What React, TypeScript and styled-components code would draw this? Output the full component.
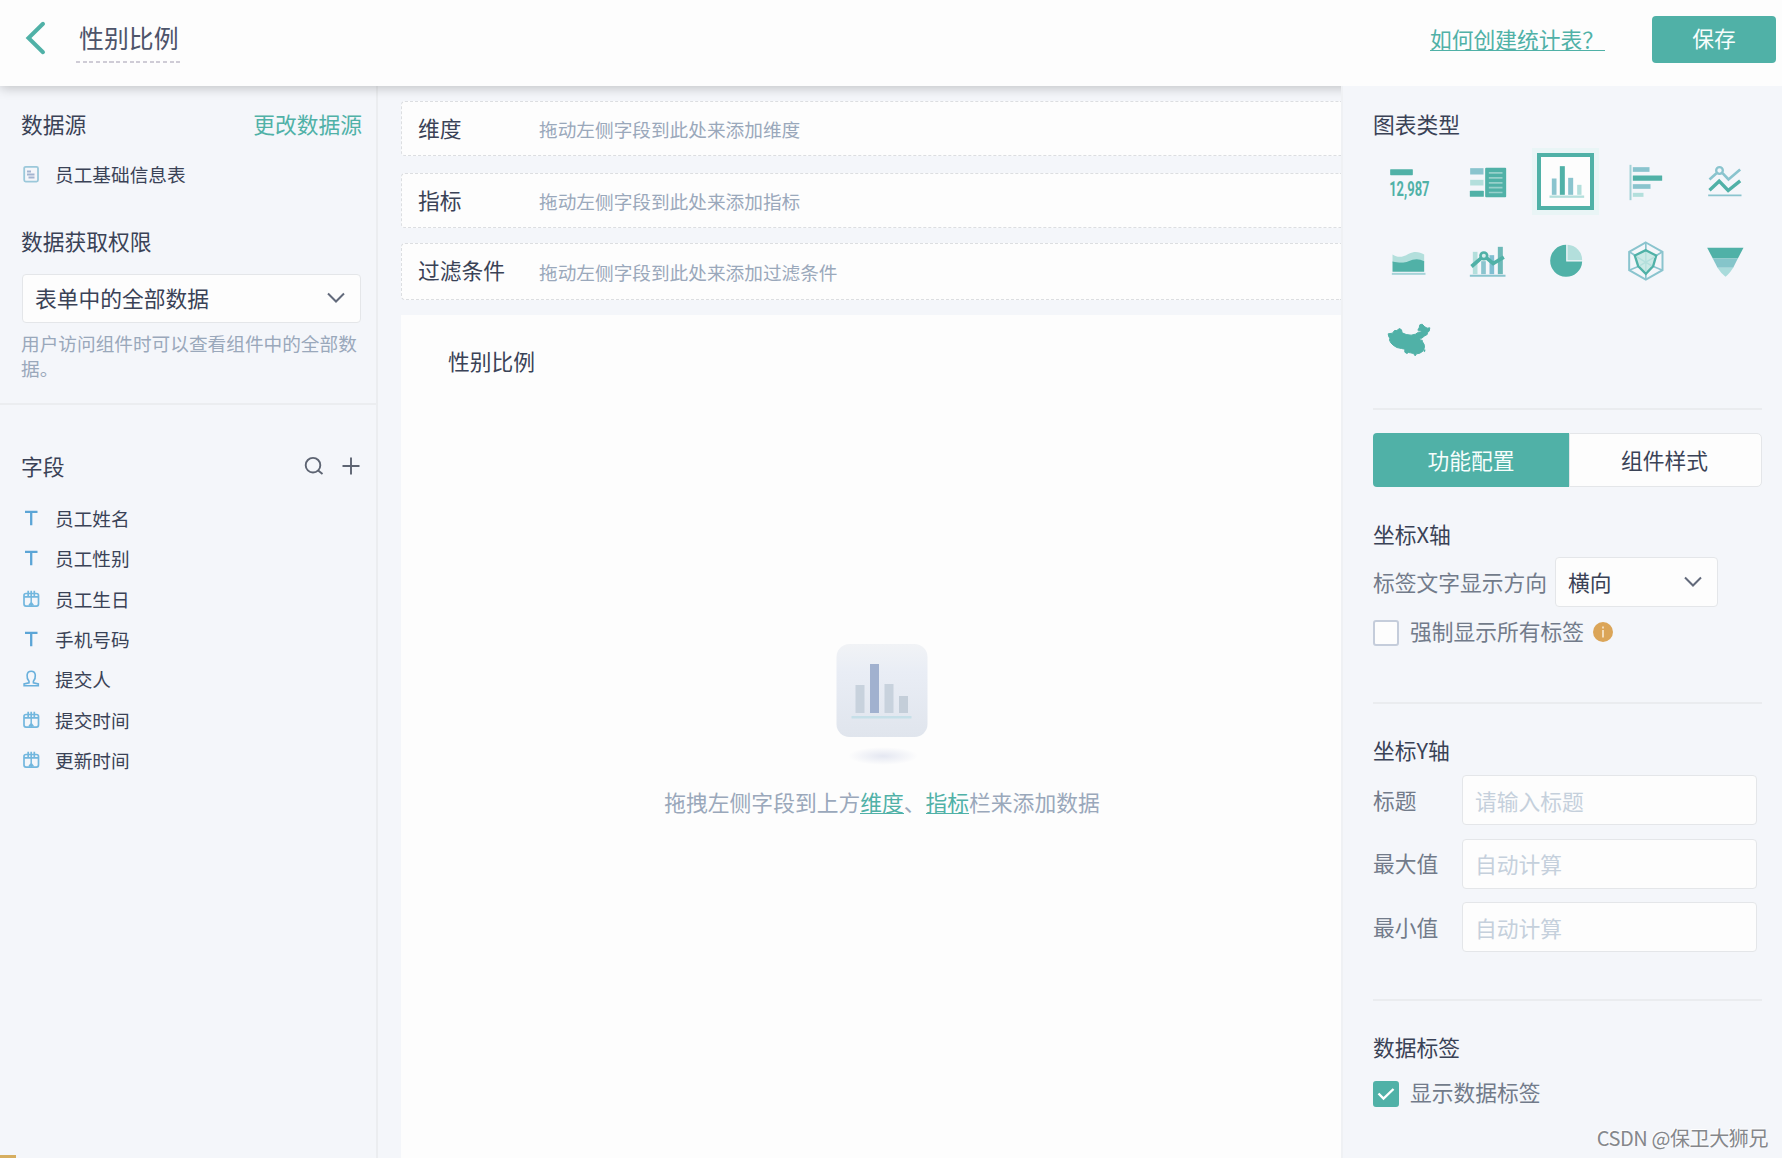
import React from "react";
import styled, { createGlobalStyle } from "styled-components";

const teal = "#50b1a7";
const blueTeal = "#8ac4ce";
const paleTeal = "#b3dfdc";
const ink = "#3a4256";
const soft = "#727b8a";
const muted = "#9aa8bb";
const panel = "#f4f6fa";
const paper = "#fdfdfd";
const line = "#e4e6e9";

const GlobalStyle = createGlobalStyle`
  * { box-sizing: border-box; }
  body {
    margin: 0;
    background: ${panel};
    color: ${ink};
    font-family: "Noto Sans CJK SC", "Liberation Sans", sans-serif;
    font-size: 21.77px;
    line-height: 28px;
    overflow: hidden;
  }
`;

const Page = styled.div`
  display: flex;
  flex-direction: column;
  height: 1158px;
  position: relative;
  overflow: hidden;
`;

const Header = styled.header`
  display: flex;
  align-items: flex-start;
  height: 86px;
  flex: none;
  padding: 0 6px 0 24px;
  background: ${paper};
  box-shadow: 0 2px 11px rgba(0, 0, 0, 0.22);
  position: relative;
  z-index: 1;
`;

const BackIcon = styled.svg`
  width: 24px;
  height: 36px;
  margin-top: 20px;
`;

const PageTitle = styled.div`
  margin: 19px auto 0 28px;
  height: 44px;
  width: 106px;
  padding-left: 3px;
  font-size: 24.9px;
  line-height: 37px;
  white-space: nowrap;
  color: #4d546a;
  background: repeating-linear-gradient(90deg, #cfccd6 0 4px, transparent 4px 6.7px) left bottom / 100% 2px no-repeat;
`;

const HelpLink = styled.a`
  margin: 25px 47px 0 0;
  color: ${teal};
  width: 175px;
  height: 26px;
  line-height: 28px;
  white-space: nowrap;
  border-bottom: 1.5px solid ${teal};
`;

const SaveButton = styled.button`
  margin-top: 15.5px;
  width: 124px;
  height: 47px;
  padding: 0 0 2px;
  border: 0;
  border-radius: 4px;
  background: ${teal};
  color: #f6fdfc;
  font: inherit;
`;

const Body = styled.div`
  display: flex;
  flex: 1;
  min-height: 0;
`;

const Sidebar = styled.aside`
  width: 378px;
  flex: none;
  padding-top: 24px;
  border-right: 2px solid #ebedf0;
`;

const SideSection = styled.section`
  padding: 0 14px 0 21px;
`;

const SideHead = styled.div`
  display: flex;
  justify-content: space-between;
  align-items: center;
  height: 28px;
`;

const TextLink = styled.a`
  color: ${teal};
`;

const ItemRow = styled.div<{ $height: number }>`
  display: flex;
  align-items: center;
  height: ${(p) => p.$height}px;
  font-size: 18.66px;
  svg {
    width: 20px;
    height: 20px;
    margin-right: 14px;
  }
`;

const FileRow = styled(ItemRow)`
  margin: 21px 0 38px;
`;

const Select = styled.div<{ $width: number; $height: number }>`
  display: flex;
  align-items: center;
  justify-content: space-between;
  width: ${(p) => p.$width}px;
  height: ${(p) => p.$height}px;
  padding: 0 14px 1px 12px;
  border: 1.5px solid ${line};
  border-radius: 4px;
  background: ${paper};
  svg {
    width: 20px;
    height: 12px;
  }
`;

const AccessSelect = styled(Select)`
  margin: 19px 0 7px 1px;
`;

const Hint = styled.p`
  margin: 0;
  font-size: 18.66px;
  line-height: 25px;
  color: ${muted};
`;

const SideDivider = styled.div`
  height: 2px;
  margin: 23px 0 47px;
  background: #ebedf0;
`;

const Tools = styled.div`
  display: flex;
  gap: 17px;
  margin-right: 1px;
  svg {
    width: 20px;
    height: 20px;
  }
`;

const FieldList = styled.div`
  margin-top: 18px;
`;

const Main = styled.main`
  flex: 1;
  min-width: 0;
  padding: 15px 0 0 23px;
  display: flex;
  flex-direction: column;
`;

const DropZone = styled.div<{ $height: number; $gap: number }>`
  display: flex;
  align-items: center;
  flex: none;
  height: ${(p) => p.$height}px;
  margin-bottom: ${(p) => p.$gap}px;
  padding: 0 0 2px 16px;
  border: 1.5px dashed #dcdee1;
  border-right: 0;
  border-radius: 4px 0 0 4px;
  background: ${paper};
`;

const ZoneLabel = styled.span<{ $raised?: boolean }>`
  width: 121px;
  padding-bottom: ${(p) => (p.$raised ? 2 : 0)}px;
`;

const ZoneHint = styled.span`
  padding-top: 2px;
  font-size: 18.66px;
  color: ${muted};
`;

const Canvas = styled.section`
  flex: 1;
  display: flex;
  flex-direction: column;
  background: ${paper};
`;

const CanvasTitle = styled.div`
  margin: 32px 0 0 47px;
`;

const Empty = styled.div`
  margin-top: 266px;
  display: flex;
  flex-direction: column;
  align-items: center;
  padding-left: 22px;
  color: ${muted};
  svg {
    width: 100px;
    height: 130px;
    margin-bottom: 17px;
  }
`;

const EmptyText = styled.div`
  white-space: nowrap;
`;

const Mark = styled.a`
  display: inline-block;
  height: 26px;
  color: ${teal};
  border-bottom: 1.5px solid ${teal};
`;

const Config = styled.aside`
  width: 441px;
  flex: none;
  position: relative;
  z-index: 2;
  padding: 24px 20px 0 30px;
  background: ${panel};
  border-left: 2px solid #eff1f4;
`;

const ChartGrid = styled.div`
  display: grid;
  grid-template-columns: repeat(5, 79px);
  grid-auto-rows: 79px;
  margin: 4px 0 29px -5px;
`;

const ChartCell = styled.button<{ $active?: boolean }>`
  display: flex;
  align-items: center;
  justify-content: center;
  width: 57px;
  height: 57px;
  margin: 11px;
  padding: 0 2px 1px 0;
  border: 4px solid ${(p) => (p.$active ? teal : "transparent")};
  background: ${(p) => (p.$active ? paper : "transparent")};
  box-shadow: 0 0 0 5px ${(p) => (p.$active ? "#e9f5f6" : "transparent")};
  svg {
    width: 48px;
    height: 48px;
    flex: none;
    overflow: visible;
  }
`;

const Divider = styled.div<{ $top?: number; $bottom: number }>`
  height: 2px;
  margin: ${(p) => p.$top ?? 0}px 0 ${(p) => p.$bottom}px;
  background: #eaecef;
`;

const Tabs = styled.div`
  display: flex;
  height: 54px;
  margin-bottom: 33px;
`;

const Tab = styled.button<{ $active?: boolean }>`
  width: ${(p) => (p.$active ? 196 : 193)}px;
  padding: 0 ${(p) => (p.$active ? 0 : 2)}px 0 0;
  border: ${(p) => (p.$active ? "0" : `1.5px solid ${line}`)};
  border-radius: ${(p) => (p.$active ? "4px 0 0 4px" : "0 5px 5px 0")};
  background: ${(p) => (p.$active ? teal : paper)};
  color: ${(p) => (p.$active ? "#f6fdfc" : ink)};
  font: inherit;
`;

const ControlRow = styled.div<{ $top: number }>`
  display: flex;
  align-items: center;
  margin-top: ${(p) => p.$top}px;
  color: ${soft};
`;

const ControlLabel = styled.span<{ $width: number }>`
  width: ${(p) => p.$width}px;
  padding-bottom: 1px;
`;

const DirectionSelect = styled(Select)`
  color: ${ink};
`;

const Box = styled.span<{ $on?: boolean }>`
  display: flex;
  align-items: center;
  justify-content: center;
  width: 26px;
  height: 26px;
  margin-right: 11px;
  border: 2px solid ${(p) => (p.$on ? teal : "#c5cddb")};
  border-radius: 3px;
  background: ${(p) => (p.$on ? teal : paper)};
  svg {
    width: 18px;
    height: 14px;
  }
`;

const BoxLabel = styled.span`
  height: 28px;
  margin-top: -4px;
`;

const InfoIcon = styled.svg`
  width: 20px;
  height: 20px;
  margin: -3px 0 0 9px;
`;

const Input = styled.input`
  width: 295px;
  height: 50px;
  padding: 0 14px 0 12px;
  border: 1.5px solid ${line};
  border-radius: 4px;
  background: ${paper};
  font: inherit;
  color: ${ink};
  &::placeholder {
    color: #c5d0dc;
    opacity: 1;
  }
`;

const Watermark = styled.div`
  position: absolute;
  z-index: 3;
  right: 14px;
  bottom: 6px;
  font-size: 20px;
  letter-spacing: -0.4px;
  color: #85878b;
  text-shadow: -1px -1px 0 #fff;
`;

const CornerTag = styled.div`
  position: absolute;
  left: 0;
  bottom: 0;
  width: 16px;
  height: 3px;
  background: #d6ae60;
`;

const Chevron = () => (
  <svg viewBox="0 0 20 12" fill="none" stroke="#626a7b" strokeWidth="2">
    <path d="M2 1.5 10 9.5 18 1.5" />
  </svg>
);

const fieldIcons: Record<string, React.ReactNode> = {
  text: (
    <svg viewBox="0 0 20 20" fill="none" stroke="#5ba5d6" strokeWidth="2.3">
      <path d="M4 3.900H16.500M10.200 4V17.300" />
    </svg>
  ),
  date: (
    <svg viewBox="0 0 20 20" fill="none" stroke="#72b7de" strokeWidth="1.7">
      <rect x="3" y="4.500" width="14.500" height="12.600" rx="2" />
      <path d="M3 7.800H17.500M7.200 1.800V7.500M10.200 1.800V7.500M13.300 1.800V7.500" />
      <path d="M10.200 8V17M8 16.500 10.200 13.500 12.400 16.500" strokeWidth="1.500" />
    </svg>
  ),
  user: (
    <svg viewBox="0 0 20 20" fill="none" stroke="#69b0dc" strokeWidth="1.6">
      <path d="M8 12.300C6.400 10.400 5.900 8 6.100 6 6.400 3.600 8 2.300 10.200 2.300S14 3.600 14.300 6c.2 2-.3 4.400-1.900 6.300v1.500L17.300 15V16.700H3.100V15L8 13.800Z" />
    </svg>
  ),
};

const fields = [
  ["text", "员工姓名"],
  ["text", "员工性别"],
  ["date", "员工生日"],
  ["text", "手机号码"],
  ["user", "提交人"],
  ["date", "提交时间"],
  ["date", "更新时间"],
];

const zones = [
  { label: "维度", hint: "拖动左侧字段到此处来添加维度", height: 55, gap: 17 },
  { label: "指标", hint: "拖动左侧字段到此处来添加指标", height: 55, gap: 15 },
  { label: "过滤条件", hint: "拖动左侧字段到此处来添加过滤条件", height: 57, gap: 15, raised: true },
];

const chartIcons: { name: string; active?: boolean; icon: React.ReactNode }[] = [
  {
    name: "number",
    icon: (
      <svg viewBox="70.5 52.5 144 144" fill={teal}>
        <rect x="92" y="89" width="68" height="18" rx="2" />
        <text x="89" y="168" fontFamily="Roboto" fontWeight="700" fontSize="61" textLength="121" lengthAdjust="spacingAndGlyphs">12,987</text>
      </svg>
    ),
  },
  {
    name: "table",
    icon: (
      <svg viewBox="307.5 52.5 144 144">
        <rect x="332" y="86" width="40" height="19" fill={blueTeal} />
        <rect x="332" y="121" width="40" height="17" fill={paleTeal} />
        <rect x="331" y="154" width="42" height="18" rx="2" fill={teal} />
        <rect x="377" y="85" width="63" height="88" rx="3" fill={teal} />
        <path d="M388 100H429M388 115H429M388 130H429M388 144.500H429M388 159H429" stroke="#96d0ca" strokeWidth="5" />
      </svg>
    ),
  },
  {
    name: "column",
    active: true,
    icon: (
      <svg viewBox="544.5 52.5 144 144">
        <rect x="577" y="117" width="14" height="49" fill={blueTeal} />
        <rect x="601" y="80" width="15" height="86" fill={teal} />
        <rect x="626" y="115" width="15" height="51" fill={blueTeal} />
        <rect x="653" y="136" width="13" height="30" fill={paleTeal} />
        <rect x="570" y="168" width="104" height="7" fill={paleTeal} />
      </svg>
    ),
  },
  {
    name: "bar",
    icon: (
      <svg viewBox="781.5 52.5 144 144">
        <rect x="810" y="76" width="6" height="106" fill="#a5d3d8" />
        <rect x="820" y="83" width="50" height="14" fill={blueTeal} />
        <rect x="820" y="108" width="88" height="16" rx="1" fill={teal} />
        <rect x="820" y="134" width="53" height="14" fill={blueTeal} />
        <rect x="820" y="160" width="32" height="12" fill={paleTeal} />
      </svg>
    ),
  },
  {
    name: "line",
    icon: (
      <svg viewBox="1018.500 52.5 144 144" fill="none">
        <path d="M1050 120 1071 101M1089 101 1107 120 1142 90" stroke={blueTeal} strokeWidth="8" />
        <circle cx="1080" cy="93" r="10" stroke={blueTeal} strokeWidth="7" />
        <path d="M1050 152 1079 125 1106 153 1142 124" stroke={teal} strokeWidth="10" />
        <path d="M1046 167.500H1146" stroke={blueTeal} strokeWidth="5" />
      </svg>
    ),
  },
  {
    name: "area",
    icon: (
      <svg viewBox="70.5 289.5 144 144">
        <path d="M99 345C116 356 130 353 148 343 165 334 180 337 194 345V370H99Z" fill={paleTeal} />
        <path d="M99 366C117 369 131 372 147 365 164 357 179 357 194 365V397H99Z" fill={teal} />
        <rect x="97" y="400" width="101" height="6" fill="#a5d3d8" />
      </svg>
    ),
  },
  {
    name: "combo",
    icon: (
      <svg viewBox="307.5 289.5 144 144" fill="none">
        <rect x="340" y="337" width="14" height="67" fill={paleTeal} />
        <rect x="365" y="365" width="14" height="39" fill={blueTeal} />
        <rect x="390" y="347" width="14" height="57" fill="#80bfd2" />
        <rect x="415" y="322" width="15" height="82" fill="#6db9b8" />
        <path d="M336 381 365 356M381 355 401 372 433 353" stroke={teal} strokeWidth="11" />
        <circle cx="373" cy="349" r="10" stroke={teal} strokeWidth="8" fill="#d8edec" />
        <path d="M331 408.500H438" stroke={blueTeal} strokeWidth="6" />
      </svg>
    ),
  },
  {
    name: "pie",
    icon: (
      <svg viewBox="544.5 289.5 144 144">
        <path d="M620 316A48 48 0 1 0 668 366H620Z" fill={teal} />
        <path d="M624 316A46 46 0 0 1 668 362H624Z" fill={paleTeal} />
      </svg>
    ),
  },
  {
    name: "radar",
    icon: (
      <svg viewBox="781.5 289.5 144 144" fill="none">
        <path d="M859 309 909 337V392L859 420 809 392V337Z" stroke={blueTeal} strokeWidth="6" />
        <path d="M859 309V335M909 337 889 349M909 392 880 380M859 420V402M809 392 838 380M809 337 829 349" stroke={blueTeal} strokeWidth="5" />
        <path d="M859 332 890 348 881 380 859 403 836 380 826 348Z" fill="#cbe9e6" stroke={teal} strokeWidth="7" />
        <path d="M859 337V397M832 352 877 379M886 352 840 379" stroke={paleTeal} strokeWidth="4" />
      </svg>
    ),
  },
  {
    name: "funnel",
    icon: (
      <svg viewBox="1018.500 289.5 144 144">
        <path d="M1043 325H1152L1135 357H1060Z" fill={teal} />
        <path d="M1060 357H1135L1121 385H1074Z" fill="#85c5ca" />
        <path d="M1074 385H1121Q1109 404 1098 412 1086 404 1074 385Z" fill="#a9dbdb" />
      </svg>
    ),
  },
  {
    name: "map",
    icon: (
      <svg viewBox="70.5 526.500 144 144" fill={teal} stroke={teal} strokeWidth="3" strokeLinejoin="round">
        <path d="M86 583 99 581 105 573 112 573 120 567 126 571 128 580 140 585 155 587 168 584 177 578 186 577 184 573 175 572 179 565 181 556 188 554 196 562 203 566 211 565 209 575 204 579 203 585 194 590 187 596 181 596 182 602 188 602 189 607 194 615 195 624 190 635 181 641 171 643 167 649 162 642 153 640 147 639 142 642 136 638 136 629 126 627 112 624 101 617 94 610 90 602 91 596 88 592Z" />
        <path d="M194 629 198 631 196 638 192 635Z" strokeWidth="0" />
      </svg>
    ),
  },
];

export default function App() {
  return (
    <Page>
      <GlobalStyle />
      <Header>
        <BackIcon viewBox="0 0 24 36" fill="none" stroke={teal} strokeWidth="4" strokeLinecap="round">
          <path d="M19 3.800 4.500 18 19 32.200" />
        </BackIcon>
        <PageTitle>性别比例</PageTitle>
        <HelpLink>如何创建统计表？</HelpLink>
        <SaveButton>保存</SaveButton>
      </Header>
      <Body>
        <Sidebar>
          <SideSection>
            <SideHead>
              数据源<TextLink>更改数据源</TextLink>
            </SideHead>
            <FileRow $height={30}>
              <svg viewBox="0 0 20 20" fill="none" stroke="#9bc8da" strokeWidth="1.8">
                <rect x="3.200" y="2.800" width="13.800" height="14.800" rx="1.500" />
                <path d="M6 7.500H10M6 10.500H13.500M7.500 13.500H13.500" stroke="#a3b4d0" />
              </svg>
              员工基础信息表
            </FileRow>
            <SideHead>数据获取权限</SideHead>
            <AccessSelect $width={339} $height={49}>
              表单中的全部数据
              <Chevron />
            </AccessSelect>
            <Hint>用户访问组件时可以查看组件中的全部数据。</Hint>
          </SideSection>
          <SideDivider />
          <SideSection>
            <SideHead>
              字段
              <Tools>
                <svg viewBox="0 0 20 20" fill="none" stroke="#5d6472" strokeWidth="1.900">
                  <circle cx="9" cy="9.200" r="7.300" />
                  <path d="M14.200 14.500 18.500 18" />
                </svg>
                <svg viewBox="0 0 20 20" fill="none" stroke="#5d6472" strokeWidth="1.900">
                  <path d="M10 1.500V18.500M1.500 10H18.500" />
                </svg>
              </Tools>
            </SideHead>
            <FieldList>
              {fields.map(([kind, label]) => (
                <ItemRow key={label} $height={40.3}>
                  {fieldIcons[kind]}
                  {label}
                </ItemRow>
              ))}
            </FieldList>
          </SideSection>
        </Sidebar>
        <Main>
          {zones.map((z) => (
            <DropZone key={z.label} $height={z.height} $gap={z.gap}>
              <ZoneLabel $raised={z.raised}>{z.label}</ZoneLabel>
              <ZoneHint>{z.hint}</ZoneHint>
            </DropZone>
          ))}
          <Canvas>
            <CanvasTitle>性别比例</CanvasTitle>
            <Empty>
              <svg viewBox="0 0 100 130">
                <defs>
                  <linearGradient id="tile" x1="0" y1="0" x2="0" y2="1">
                    <stop offset="0" stopColor="#f1f3f6" />
                    <stop offset="0.300" stopColor="#e9edf5" />
                    <stop offset="1" stopColor="#e0e5ed" />
                  </linearGradient>
                  <radialGradient id="shade">
                    <stop offset="0" stopColor="#e4e7f1" />
                    <stop offset="1" stopColor="#fdfdfd" />
                  </radialGradient>
                </defs>
                <rect x="4.500" y="3" width="91" height="93" rx="13" fill="url(#tile)" />
                <rect x="23.500" y="44" width="9" height="28" fill="#c8d2dd" />
                <rect x="38" y="23" width="9" height="49" fill="#a1b1cf" />
                <rect x="52.500" y="43" width="9" height="29" fill="#c8d2dd" />
                <rect x="67" y="55" width="9" height="17" fill="#c4ced9" />
                <rect x="19.500" y="75" width="60" height="2.500" fill="#c6dfe8" />
                <ellipse cx="51" cy="115" rx="35" ry="9" fill="url(#shade)" />
              </svg>
              <EmptyText>
                拖拽左侧字段到上方<Mark>维度</Mark>、<Mark>指标</Mark>栏来添加数据
              </EmptyText>
            </Empty>
          </Canvas>
        </Main>
        <Config>
          <SideHead>图表类型</SideHead>
          <ChartGrid>
            {chartIcons.map((c) => (
              <ChartCell key={c.name} $active={c.active} aria-label={c.name}>
                {c.icon}
              </ChartCell>
            ))}
          </ChartGrid>
          <Divider $bottom={23} />
          <Tabs>
            <Tab $active>功能配置</Tab>
            <Tab>组件样式</Tab>
          </Tabs>
          <SideHead>坐标X轴</SideHead>
          <ControlRow $top={9}>
            <ControlLabel $width={182}>标签文字显示方向</ControlLabel>
            <DirectionSelect $width={163} $height={50}>
              横向
              <Chevron />
            </DirectionSelect>
          </ControlRow>
          <ControlRow $top={13}>
            <Box />
            <BoxLabel>强制显示所有标签</BoxLabel>
            <InfoIcon viewBox="0 0 20 20">
              <circle cx="10" cy="10" r="10" fill="#dba558" />
              <path d="M10 4.500V6.500M10 8V15.500" stroke="#f5e3c6" strokeWidth="1.800" />
            </InfoIcon>
          </ControlRow>
          <Divider $top={56} $bottom={32} />
          <SideHead>坐标Y轴</SideHead>
          <ControlRow $top={11}>
            <ControlLabel $width={89}>标题</ControlLabel>
            <Input placeholder="请输入标题" />
          </ControlRow>
          <ControlRow $top={13.5}>
            <ControlLabel $width={89}>最大值</ControlLabel>
            <Input placeholder="自动计算" />
          </ControlRow>
          <ControlRow $top={13.5}>
            <ControlLabel $width={89}>最小值</ControlLabel>
            <Input placeholder="自动计算" />
          </ControlRow>
          <Divider $top={47} $bottom={32} />
          <SideHead>数据标签</SideHead>
          <ControlRow $top={20}>
            <Box $on>
              <svg viewBox="0 0 18 14" fill="none" stroke="#fff" strokeWidth="2.400">
                <path d="M1.500 6.500 6.500 11.500 16.500 2" />
              </svg>
            </Box>
            <BoxLabel>显示数据标签</BoxLabel>
          </ControlRow>
        </Config>
      </Body>
      <Watermark>CSDN @保卫大狮兄</Watermark>
      <CornerTag />
    </Page>
  );
}
